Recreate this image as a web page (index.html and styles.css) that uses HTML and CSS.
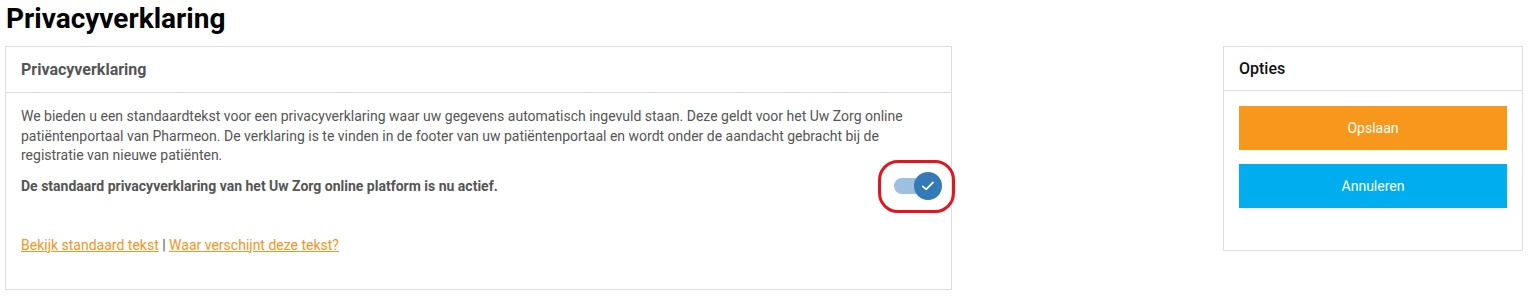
FILE: index.html
```html
<!DOCTYPE html>
<html>
  <head>
    <meta charset="UTF-8">
    <title>Privacyverklaring</title>
    <link rel="stylesheet" href="styles.css">
  </head>

  <body>
    <h1 class="page-title">Privacyverklaring</h1>

    <div class="layout">
      <div class="card card-main">
        <div class="card-header card-header-bold">Privacyverklaring</div>
        <div class="card-body">
          <p class="intro">We bieden u een standaardtekst voor een privacyverklaring waar uw gegevens automatisch ingevuld staan. Deze geldt voor het Uw Zorg online pati&euml;ntenportaal van Pharmeon. De verklaring is te vinden in de footer van uw pati&euml;ntenportaal en wordt onder de aandacht gebracht bij de registratie van nieuwe pati&euml;nten.</p>

          <div class="status-row">
            <strong>De standaard privacyverklaring van het Uw Zorg online platform is nu actief.</strong>
            <div class="toggle">
              <span class="toggle-track"></span>
              <span class="toggle-knob">
                <svg width="16" height="16" viewBox="0 0 16 16">
                  <path d="M2.8 8.4 L6.2 11.4 L13 4.4" fill="none" stroke="#fff" stroke-width="1.7" stroke-linecap="round" stroke-linejoin="round"/>
                </svg>
              </span>
              <span class="highlight"></span>
            </div>
          </div>

          <p class="links"><a href="#">Bekijk standaard tekst</a> | <a href="#">Waar verschijnt deze tekst?</a></p>
        </div>
      </div>

      <div class="card card-side">
        <div class="card-header">Opties</div>
        <div class="card-body side-body">
          <button class="btn btn-save">Opslaan</button>
          <button class="btn btn-cancel">Annuleren</button>
        </div>
      </div>
    </div>
  </body>
</html>
```

FILE: styles.css
```css
body {
  margin: 0;
  padding: 0 7px 0 5px;
  font-family: Roboto, "Liberation Sans", sans-serif;
  font-size: 14px;
  color: #555;
  background-color: white;
}

.page-title {
  margin: 2px 0 0 1px;
  font-size: 28px;
  line-height: 34px;
  font-weight: bold;
  color: #000;
}

.layout {
  display: flex;
  justify-content: space-between;
  align-items: flex-start;
  margin-top: 10px;
}

.card {
  border: 1px solid #ddd;
  background-color: white;
}

.card-main {
  width: 945px;
}

.card-side {
  width: 298px;
}

.card-header {
  padding: 0 15px;
  line-height: 43px;
  font-size: 16px;
  font-weight: 500;
  color: #111;
  border-bottom: 1px solid #ddd;
}

.card-header-bold {
  line-height: 45px;
  font-weight: bold;
  color: #555;
}

.card-body {
  padding: 14px 15px 34px 15px;
}

.intro {
  margin: 0;
  line-height: 19.6px;
}

.status-row {
  display: flex;
  justify-content: space-between;
  align-items: center;
  height: 28px;
  margin-top: 6px;
}

.toggle {
  position: relative;
  width: 48px;
  height: 28px;
  margin-right: -6px;
}

.toggle-track {
  position: absolute;
  left: 0;
  top: 6px;
  width: 40px;
  height: 16px;
  border-radius: 8px;
  background-color: #9dbfe0;
}

.toggle-knob {
  position: absolute;
  right: 0;
  top: 0;
  width: 28px;
  height: 28px;
  border-radius: 50%;
  background-color: #337ab7;
  display: flex;
  align-items: center;
  justify-content: center;
}

.highlight {
  position: absolute;
  left: -16px;
  top: -12px;
  width: 71px;
  height: 47px;
  border: 3px solid #e3161f;
  border-radius: 20px;
}

.links {
  margin: 35px 0 0 0;
  line-height: 20px;
}

.links a {
  color: #f7941d;
  text-decoration: underline;
}

.side-body {
  padding: 15px 15px 42px 15px;
  display: flex;
  flex-direction: column;
  gap: 14px;
}

.btn {
  height: 44px;
  border: none;
  font-family: Roboto, "Liberation Sans", sans-serif;
  font-size: 14px;
  color: white;
  cursor: pointer;
}

.btn-save {
  background-color: #f7981d;
}

.btn-cancel {
  background-color: #00aeef;
}
```
